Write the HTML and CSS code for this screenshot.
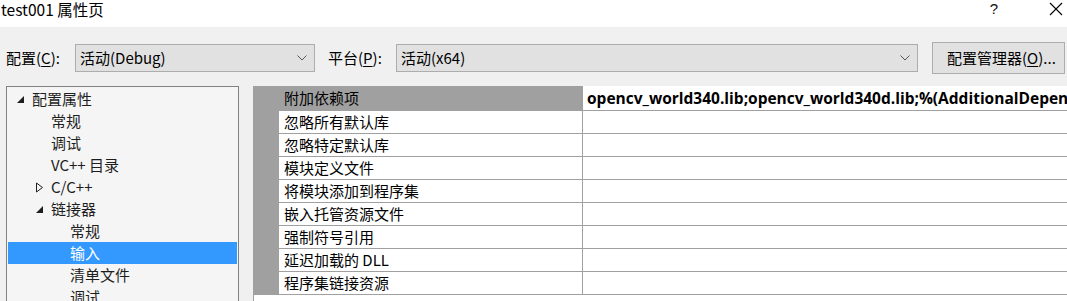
FILE: index.html
```html
<!DOCTYPE html>
<html lang="zh">
<head>
<meta charset="utf-8">
<title>test001 属性页</title>
<link rel="stylesheet" href="styles.css">
</head>
<body>
<div class="window">
  <div class="titlebar">
    <span class="title">test001 属性页</span>
    <span class="tb-help">?</span>
    <span class="tb-close"><svg width="14" height="14" viewBox="0 0 14 14"><path d="M1 1L13 13M13 1L1 13" stroke="#000" stroke-width="1.1" fill="none"/></svg></span>
  </div>
  <div class="toolbar">
    <span class="label">配置(<u>C</u>):</span>
    <div class="combo combo-config"><span>活动(Debug)</span><svg class="chev" width="10" height="6" viewBox="0 0 10 6"><path d="M0.5 0.5L5 5L9.5 0.5" stroke="#555" fill="none"/></svg></div>
    <span class="label label-platform">平台(<u>P</u>):</span>
    <div class="combo combo-platform"><span>活动(x64)</span><svg class="chev" width="10" height="6" viewBox="0 0 10 6"><path d="M0.5 0.5L5 5L9.5 0.5" stroke="#555" fill="none"/></svg></div>
    <button class="btn">配置管理器(<u>O</u>)...</button>
  </div>
  <div class="main">
    <div class="tree">
      <div class="node l1"><span class="tw"><svg width="9" height="9" viewBox="0 0 9 9"><path d="M8 1L8 8L1 8Z" fill="#1e1e1e"/></svg></span>配置属性</div>
      <div class="node l2">常规</div>
      <div class="node l2">调试</div>
      <div class="node l2">VC++ 目录</div>
      <div class="node l2c"><span class="tw"><svg width="9" height="11" viewBox="0 0 9 11"><path d="M1.5 1L7.5 5.5L1.5 10Z" fill="none" stroke="#1e1e1e"/></svg></span>C/C++</div>
      <div class="node l2c"><span class="tw"><svg width="9" height="9" viewBox="0 0 9 9"><path d="M8 1L8 8L1 8Z" fill="#1e1e1e"/></svg></span>链接器</div>
      <div class="node l3">常规</div>
      <div class="node l3 sel">输入</div>
      <div class="node l3">清单文件</div>
      <div class="node l3">调试</div>
    </div>
    <div class="grid">
      <div class="row first"><div class="gut"></div><div class="name">附加依赖项</div><div class="val">opencv_world340.lib;opencv_world340d.lib;%(AdditionalDependencies)</div></div>
      <div class="row"><div class="gut"></div><div class="name">忽略所有默认库</div><div class="val"></div></div>
      <div class="row"><div class="gut"></div><div class="name">忽略特定默认库</div><div class="val"></div></div>
      <div class="row"><div class="gut"></div><div class="name">模块定义文件</div><div class="val"></div></div>
      <div class="row"><div class="gut"></div><div class="name">将模块添加到程序集</div><div class="val"></div></div>
      <div class="row"><div class="gut"></div><div class="name">嵌入托管资源文件</div><div class="val"></div></div>
      <div class="row"><div class="gut"></div><div class="name">强制符号引用</div><div class="val"></div></div>
      <div class="row"><div class="gut"></div><div class="name">延迟加载的 DLL</div><div class="val"></div></div>
      <div class="row"><div class="gut"></div><div class="name">程序集链接资源</div><div class="val"></div></div>
      <div class="rest"></div>
    </div>
  </div>
</div>
</body>
</html>
```
FILE: styles.css
```css
html, body {
  margin: 0;
  padding: 0;
  width: 1067px;
  height: 301px;
  overflow: hidden;
  background: #f0f0f0;
}
body {
  font-family: "Noto Sans CJK SC", "Noto Sans", sans-serif;
  font-size: 15px;
  color: #000;
}
.window {
  display: flex;
  flex-direction: column;
  height: 301px;
}
.titlebar {
  height: 27px;
  background: #fff;
  display: flex;
  align-items: flex-start;
  flex-shrink: 0;
}
.title {
  font-size: 15.5px;
  line-height: 18px;
  margin-left: 1px;
  flex: 1;
}
.tb-help {
  font-family: "Liberation Sans", sans-serif;
  font-size: 15px;
  line-height: 18px;
  margin-right: 51px;
  color: #111;
}
.tb-close {
  margin-top: 2px;
  margin-right: 4px;
  line-height: 0;
}
.toolbar {
  display: flex;
  align-items: center;
  height: 59px;
  flex-shrink: 0;
  padding-left: 6px;
  box-sizing: border-box;
  padding-top: 2px;
}
.toolbar > * { flex-shrink: 0; }
.label {
  width: 69px;
  line-height: 20px;
}
.label u, .btn u {
  text-decoration-thickness: 1px;
  text-underline-offset: 2px;
}
.label-platform {
  width: 68px;
  margin-left: 13px;
}
.combo {
  height: 28px;
  box-sizing: border-box;
  border: 1px solid #adadad;
  background: #e1e1e1;
  display: flex;
  align-items: center;
  padding-left: 4px;
  padding-right: 7px;
}
.combo span { flex: 1; }
.combo-config { width: 240px; }
.combo-platform { width: 522px; }
.btn {
  margin-left: 14px;
  height: 32px;
  width: 133px;
  box-sizing: border-box;
  border: 1px solid #adadad;
  background: #e1e1e1;
  font: inherit;
  text-align: left;
  padding: 0 0 0 14px;
  color: #000;
  white-space: nowrap;
}
.main {
  display: flex;
  flex: 1;
  min-height: 0;
  padding-left: 6px;
}
.tree {
  width: 233px;
  flex-shrink: 0;
  box-sizing: border-box;
  border: 1px solid #828282;
  border-bottom: none;
  background: #f5f5f5;
  padding: 1px 1px 0 1px;
  overflow: hidden;
}
.node {
  height: 22px;
  line-height: 22px;
  display: flex;
  align-items: center;
  white-space: nowrap;
  color: #1e1e1e;
}
.node .tw {
  width: 16px;
  display: inline-flex;
  align-items: center;
  line-height: 0;
}
.l1 { padding-left: 8px; }
.l2 { padding-left: 43px; }
.l2c { padding-left: 27px; }
.l3 { padding-left: 62px; }
.sel {
  background: #3399ff;
  color: #fff;
}
.grid {
  margin-left: 14px;
  flex: 1;
  min-width: 0;
  display: flex;
  flex-direction: column;
  border-left: 1px solid #a0a0a0;
  background: #fff;
}
.row {
  display: flex;
  height: 23px;
  box-sizing: border-box;
  border-bottom: 1px solid #a0a0a0;
  flex-shrink: 0;
}
.row.first { height: 25px; }
.gut {
  width: 25px;
  background: #a0a0a0;
  flex-shrink: 0;
}
.name {
  width: 304px;
  flex-shrink: 0;
  box-sizing: border-box;
  border-right: 1px solid #a0a0a0;
  padding-left: 5px;
  line-height: 22px;
  white-space: nowrap;
}
.first .name { background: #a0a0a0; line-height: 24px; }
.val {
  flex: 1;
  min-width: 0;
  overflow: hidden;
  white-space: nowrap;
  padding-left: 4px;
  font-family: "Open Sans", "Noto Sans", sans-serif;
  font-weight: 700;
  font-size: 15.5px;
  line-height: 24px;
}
.rest {
  flex: 1;
  background: #fff;
}
```
